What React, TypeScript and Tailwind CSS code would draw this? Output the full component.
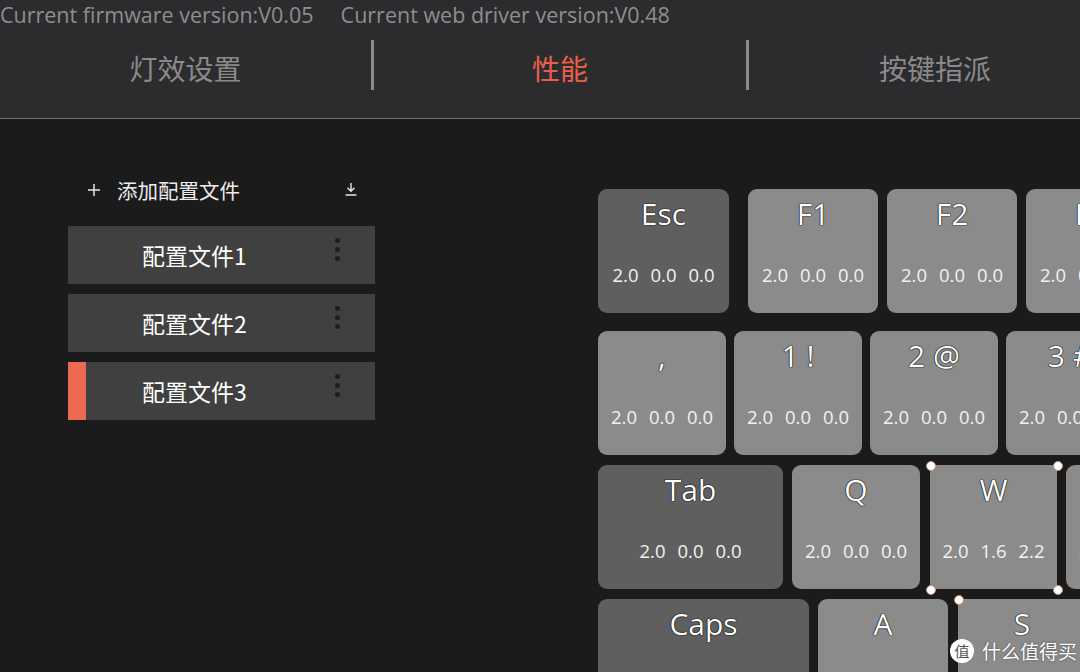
import React from "react";

const latin = "font-['Open_Sans','Noto_Sans_CJK_SC',sans-serif]";
const cjk = "font-['Noto_Sans_CJK_SC','Noto_Sans',sans-serif]";

type KeyProps = {
  label: string;
  w: string;
  dark?: boolean;
  values?: [string, string, string];
  selected?: boolean;
  dotsTopOnly?: boolean;
  className?: string;
};

function Dot({ pos }: { pos: string }) {
  return (
    <span
      className={`absolute ${pos} w-[10px] h-[10px] rounded-full bg-white border border-[#c98a63] z-10`}
    />
  );
}

function Key({ label, w, dark, values = ["2.0", "0.0", "0.0"], selected, dotsTopOnly, className = "" }: KeyProps) {
  return (
    <div
      className={`relative shrink-0 ${w} h-[124px] ${selected || dotsTopOnly ? "rounded-[3px]" : "rounded-[9px]"} ${
        dark ? "bg-[#5f5f5f]" : "bg-[#8b8b8b]"
      } flex flex-col items-center ${className}`}
    >
      <div
        className={`mt-[6px] h-[38px] leading-[38px] text-[30px] text-white whitespace-pre ${latin} [text-shadow:0_0_1px_#000,0_0_1px_#000,0_0_1px_#000]`}
      >
        {label}
      </div>
      <div
        className={`mt-[30px] h-[24px] leading-[24px] text-[18.5px] text-[#f2f2f2] flex gap-[12px] ${latin}`}
      >
        {values.map((v, i) => (
          <span key={i}>{v}</span>
        ))}
      </div>
      {selected && (
        <>
          <Dot pos="-left-[4px] -top-[4px]" />
          <Dot pos="-right-[6px] -top-[4px]" />
          <Dot pos="-left-[4px] -bottom-[6px]" />
          <Dot pos="-right-[6px] -bottom-[6px]" />
        </>
      )}
      {dotsTopOnly && (
        <>
          <Dot pos="-left-[4px] -top-[4px]" />
          <Dot pos="-right-[6px] -top-[4px]" />
        </>
      )}
    </div>
  );
}

function Profile({ name, active }: { name: string; active?: boolean }) {
  return (
    <div className="relative h-[58px] bg-[#404040] flex items-center">
      {active && <div className="absolute left-0 top-0 h-full w-[18px] bg-[#ec6a53]" />}
      <span className={`pl-[74px] text-[23px] text-white ${cjk}`}>{name}</span>
      <div className="absolute left-[267px] top-[12px] flex flex-col gap-[4px]">
        <span className="w-[5px] h-[5px] rounded-full bg-[#1e1e1e]" />
        <span className="w-[5px] h-[5px] rounded-full bg-[#1e1e1e]" />
        <span className="w-[5px] h-[5px] rounded-full bg-[#1e1e1e]" />
      </div>
    </div>
  );
}

export default function App() {
  return (
    <div className="w-[1080px] h-[672px] overflow-hidden bg-[#1b1b1b] relative">
      {/* Header */}
      <div className="h-[119px] bg-[#2c2c2e] border-b border-[#707070] flex flex-col overflow-hidden">
        <div
          className={`h-[32px] flex items-center gap-[27px] text-[21.5px] leading-[26px] text-[#8e8e8e] -mt-[1px] ${latin}`}
        >
          <span>Current firmware version:V0.05</span>
          <span>Current web driver version:V0.48</span>
        </div>
        <div className="flex mt-[9px]">
          <div className={`w-[371px] shrink-0 h-[56px] flex items-center justify-center text-[28px] text-[#8a8a8a] ${cjk}`}>
            灯效设置
          </div>
          <div className="w-[3px] shrink-0 h-[50px] bg-[#8a8a8a]" />
          <div className={`w-[372px] shrink-0 h-[56px] flex items-center justify-center text-[28px] text-[#ea5f4a] ${cjk}`}>
            性能
          </div>
          <div className="w-[3px] shrink-0 h-[50px] bg-[#8a8a8a]" />
          <div className={`w-[372px] shrink-0 h-[56px] flex items-center justify-center text-[28px] text-[#8a8a8a] ${cjk}`}>
            按键指派
          </div>
        </div>
      </div>

      {/* Main */}
      <div className="flex">
        {/* Left panel */}
        <div className="ml-[68px] w-[307px] shrink-0 pt-[51px] flex flex-col">
          <div className="h-[40px] flex items-center">
            <svg className="ml-[19px]" width="14" height="14" viewBox="0 0 14 14">
              <path d="M7 1v12M1 7h12" stroke="#e8e8e8" strokeWidth="1.5" />
            </svg>
            <span className={`ml-[16px] text-[20.5px] text-[#ececec] ${cjk}`}>添加配置文件</span>
            <svg className="ml-auto mr-[17px] -mt-[3px]" width="14" height="14" viewBox="0 0 14 14">
              <path d="M7 1v8M3.5 5.8 7 9.2l3.5-3.4M1.5 13h11" stroke="#e8e8e8" strokeWidth="1.4" fill="none" />
            </svg>
          </div>
          <div className="mt-[16px] flex flex-col gap-[10px]">
            <Profile name="配置文件1" />
            <Profile name="配置文件2" />
            <Profile name="配置文件3" active />
          </div>
        </div>

        {/* Keyboard */}
        <div className="ml-[223px] pt-[70px] flex flex-col shrink-0">
          <div className="flex">
            <Key label="Esc" w="w-[131px]" dark />
            <Key label="F1" w="w-[130px]" className="ml-[19px]" />
            <Key label="F2" w="w-[130px]" className="ml-[9px]" />
            <Key label="F3" w="w-[130px]" className="ml-[9px]" />
          </div>
          <div className="flex mt-[18px]">
            <Key label="," w="w-[128px]" />
            <Key label="1 !" w="w-[128px]" className="ml-[8px]" />
            <Key label="2 @" w="w-[128px]" className="ml-[8px]" />
            <Key label="3 #" w="w-[128px]" className="ml-[8px]" />
          </div>
          <div className="flex mt-[10px]">
            <Key label="Tab" w="w-[185px]" dark />
            <Key label="Q" w="w-[128px]" className="ml-[9px]" />
            <Key label="W" w="w-[127px]" className="ml-[10px]" values={["2.0", "1.6", "2.2"]} selected />
            <Key label="E" w="w-[128px]" className="ml-[9px]" />
          </div>
          <div className="flex mt-[10px]">
            <Key label="Caps" w="w-[211px]" dark />
            <Key label="A" w="w-[130px]" className="ml-[9px]" />
            <Key label="S" w="w-[128px]" className="ml-[10px]" dotsTopOnly />
          </div>
        </div>
      </div>

      {/* Watermark */}
      <div className="absolute left-[950px] top-[637px] flex items-center gap-[8px] z-20">
        <div className={`w-[24px] h-[24px] rounded-full bg-white flex items-center justify-center text-[15px] text-[#555] ${cjk}`}>
          值
        </div>
        <span className={`text-[19px] text-white ${cjk} [text-shadow:0_0_2px_rgba(0,0,0,0.5)]`}>什么值得买</span>
      </div>
    </div>
  );
}
